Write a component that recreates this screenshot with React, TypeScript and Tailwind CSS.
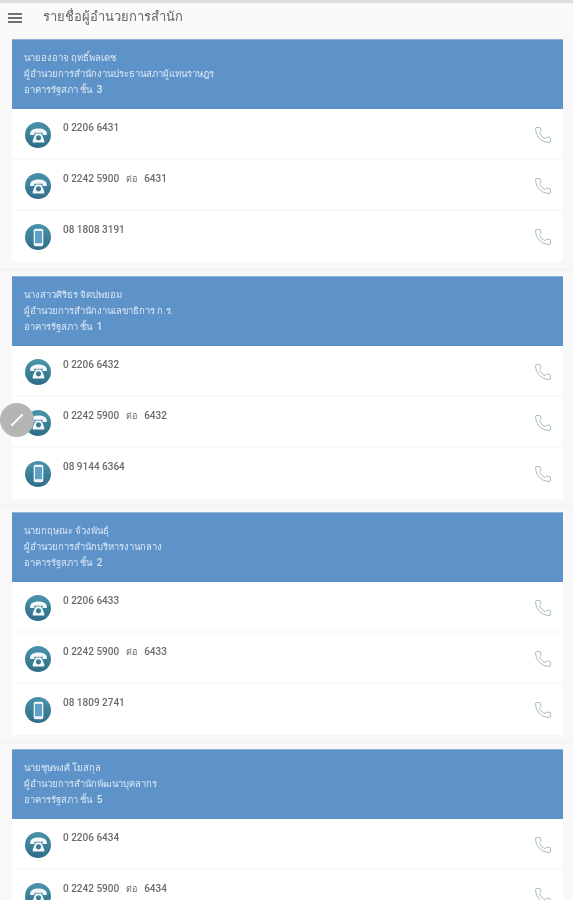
import { Phone } from "lucide-react";

type Line = { number: string; ext?: string; mobile?: boolean };
type Contact = { name: string; role: string; floor: string; lines: Line[] };

const contacts: Contact[] = [
  {
    name: "นายองอาจ ฤทธิ์พลเดช",
    role: "ผู้อำนวยการสำนักงานประธานสภาผู้แทนราษฎร",
    floor: "3",
    lines: [
      { number: "0 2206 6431" },
      { number: "0 2242 5900", ext: "6431" },
      { number: "08 1808 3191", mobile: true },
    ],
  },
  {
    name: "นางสาวศิริธร จิตปพยอม",
    role: "ผู้อำนวยการสำนักงานเลขาธิการ ก.ร.",
    floor: "1",
    lines: [
      { number: "0 2206 6432" },
      { number: "0 2242 5900", ext: "6432" },
      { number: "08 9144 6364", mobile: true },
    ],
  },
  {
    name: "นายกฤษณะ จ้วงพันธุ์",
    role: "ผู้อำนวยการสำนักบริหารงานกลาง",
    floor: "2",
    lines: [
      { number: "0 2206 6433" },
      { number: "0 2242 5900", ext: "6433" },
      { number: "08 1809 2741", mobile: true },
    ],
  },
  {
    name: "นายชุษพงศ์ โยสกุล",
    role: "ผู้อำนวยการสำนักพัฒนาบุคลากร",
    floor: "5",
    lines: [
      { number: "0 2206 6434" },
      { number: "0 2242 5900", ext: "6434" },
      { number: "08 1809 2741", mobile: true },
    ],
  },
];

function DeskPhone() {
  return (
    <svg viewBox="0 0 24 24" className="w-[21px] h-[21px]" fill="#f4f8fa">
      <path d="M2.5 9.5C2.5 6 6.8 4 12 4s9.5 2 9.5 5.5v2h-4.700V8.800H7.200v2.700H2.500z" />
      <path d="M7.400 12.500 9 9.800h6l1.600 2.700 2 5.300V20H5.400v-2.200zM12 11.600a2.900 2.900 0 1 0 0 5.800 2.900 2.900 0 0 0 0-5.800z" />
    </svg>
  );
}

function MobilePhone() {
  return (
    <svg viewBox="0 0 24 24" className="w-[21px] h-[21px]" fill="none">
      <rect x="6.500" y="2" width="11" height="20" rx="2" fill="#eef4f7" />
      <rect x="8" y="4.500" width="8" height="14" fill="#5fa0c6" />
    </svg>
  );
}

function LineRow({ line }: { line: Line }) {
  return (
    <div className="h-[51px] flex border-b-2 border-[#f9f9f9] last:border-b-0">
      <div className="ml-[13px] mt-[13px] w-[26px] h-[26px] shrink-0 rounded-full flex items-center justify-center bg-gradient-to-b from-[#4a93ab] to-[#2f6d88]">
        {line.mobile ? <MobilePhone /> : <DeskPhone />}
      </div>
      <p className="ml-[12px] mt-[12px] text-[10px] leading-[14px] text-[#6b6b6b] font-medium">
        {line.number}
        {line.ext && (
          <>
            <span className="mx-[7px] text-[9px] font-normal">ต่อ</span>
            {line.ext}
          </>
        )}
      </p>
      <Phone size={18} strokeWidth={1.25} className="ml-auto mr-[11px] mt-[17px] text-[#a3b8b8]" />
    </div>
  );
}

function ContactCard({ contact }: { contact: Contact }) {
  return (
    <section className="bg-[#f8f8f8] pt-[6px] pb-[7px] pl-[12px] pr-[10px] border-b border-[#efefef] h-[236.5px]">
      <div className="bg-white rounded-[2px]">
        <header className="h-[70px] bg-[#5e93c9] pl-[12px] pt-[10px] text-[9.5px] leading-[16px] text-[#dce8f4] border-t border-[#8fb4d8]">
          <p>{contact.name}</p>
          <p>{contact.role}</p>
          <p>
            อาคารรัฐสภา ชั้น <span className="ml-[2px] text-[10px] font-medium">{contact.floor}</span>
          </p>
        </header>
        {contact.lines.map((line) => (
          <LineRow key={line.number + (line.ext ?? "")} line={line} />
        ))}
      </div>
    </section>
  );
}

export default function App() {
  return (
    <div className="relative h-[900px] w-[573px] overflow-hidden bg-[#f8f8f8] font-['Roboto','Noto_Sans','Noto_Sans_CJK_SC',sans-serif] blur-[0.5px]">
      <div className="h-[33px] border-t-[3px] border-[#dedede] bg-[#fafafa] flex items-center">
        <div className="ml-[8px] w-[14px] flex flex-col gap-[2.5px]">
          <span className="h-[1.5px] bg-[#707070]" />
          <span className="h-[1.5px] bg-[#707070]" />
          <span className="h-[1.5px] bg-[#707070]" />
        </div>
        <h1 className="ml-[21px] -mt-[2px] text-[13px] text-[#666666]">รายชื่อผู้อำนวยการสำนัก</h1>
      </div>
      {contacts.map((contact) => (
        <ContactCard key={contact.name} contact={contact} />
      ))}
      <div className="absolute left-0 top-[403px] w-[34px] h-[34px] rounded-full bg-[#b5b5b5] flex items-center justify-center">
        <span className="block w-[16px] h-[2px] bg-white -rotate-45" />
      </div>
    </div>
  );
}
